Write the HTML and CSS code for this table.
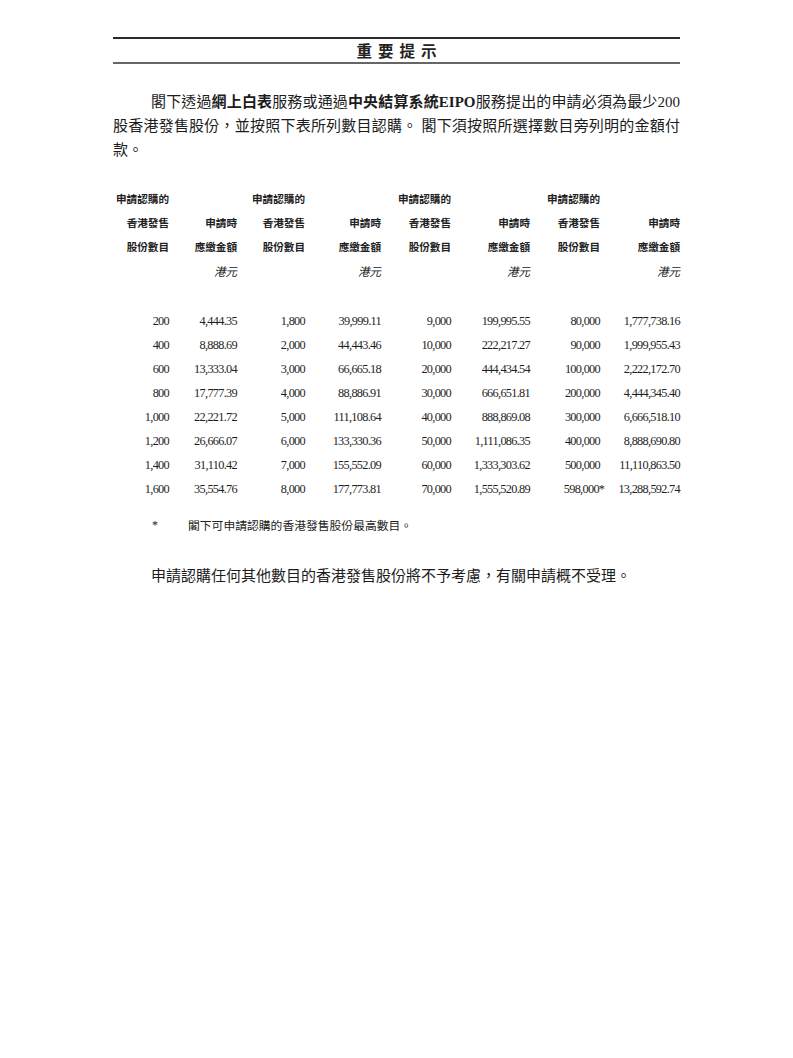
FILE: index.html
```html
<!DOCTYPE html>
<html lang="zh-Hant">
<head>
<meta charset="utf-8">
<title>重要提示</title>
<link rel="stylesheet" href="styles.css">
</head>
<body>
<div class="page">
  <div class="title">重要提示</div>

  <p class="para">閣下透過<b>網上白表</b>服務或通過<b>中央結算系統EIPO</b>服務提出的申請必須為最少200股香港發售股份，並按照下表所列數目認購。 閣下須按照所選擇數目旁列明的金額付款。</p>

  <div class="grid head">
    <div class="h">申請認購的</div><div class="h"></div>
    <div class="h">申請認購的</div><div class="h"></div>
    <div class="h">申請認購的</div><div class="h"></div>
    <div class="h">申請認購的</div><div class="h"></div>

    <div class="h">香港發售</div><div class="h">申請時</div>
    <div class="h">香港發售</div><div class="h">申請時</div>
    <div class="h">香港發售</div><div class="h">申請時</div>
    <div class="h">香港發售</div><div class="h">申請時</div>

    <div class="h">股份數目</div><div class="h">應繳金額</div>
    <div class="h">股份數目</div><div class="h">應繳金額</div>
    <div class="h">股份數目</div><div class="h">應繳金額</div>
    <div class="h">股份數目</div><div class="h">應繳金額</div>

    <div class="h"></div><div class="h unit">港元</div>
    <div class="h"></div><div class="h unit">港元</div>
    <div class="h"></div><div class="h unit">港元</div>
    <div class="h"></div><div class="h unit">港元</div>
  </div>

  <div class="grid body">
    <div class="n">200</div><div class="n">4,444.35</div><div class="n">1,800</div><div class="n">39,999.11</div><div class="n">9,000</div><div class="n">199,995.55</div><div class="n">80,000</div><div class="n">1,777,738.16</div>
    <div class="n">400</div><div class="n">8,888.69</div><div class="n">2,000</div><div class="n">44,443.46</div><div class="n">10,000</div><div class="n">222,217.27</div><div class="n">90,000</div><div class="n">1,999,955.43</div>
    <div class="n">600</div><div class="n">13,333.04</div><div class="n">3,000</div><div class="n">66,665.18</div><div class="n">20,000</div><div class="n">444,434.54</div><div class="n">100,000</div><div class="n">2,222,172.70</div>
    <div class="n">800</div><div class="n">17,777.39</div><div class="n">4,000</div><div class="n">88,886.91</div><div class="n">30,000</div><div class="n">666,651.81</div><div class="n">200,000</div><div class="n">4,444,345.40</div>
    <div class="n">1,000</div><div class="n">22,221.72</div><div class="n">5,000</div><div class="n">111,108.64</div><div class="n">40,000</div><div class="n">888,869.08</div><div class="n">300,000</div><div class="n">6,666,518.10</div>
    <div class="n">1,200</div><div class="n">26,666.07</div><div class="n">6,000</div><div class="n">133,330.36</div><div class="n">50,000</div><div class="n">1,111,086.35</div><div class="n">400,000</div><div class="n">8,888,690.80</div>
    <div class="n">1,400</div><div class="n">31,110.42</div><div class="n">7,000</div><div class="n">155,552.09</div><div class="n">60,000</div><div class="n">1,333,303.62</div><div class="n">500,000</div><div class="n">11,110,863.50</div>
    <div class="n">1,600</div><div class="n">35,554.76</div><div class="n">8,000</div><div class="n">177,773.81</div><div class="n">70,000</div><div class="n">1,555,520.89</div><div class="n">598,000<span class="hang">*</span></div><div class="n">13,288,592.74</div>
  </div>

  <div class="note"><span class="star">*</span><span class="note-text">閣下可申請認購的香港發售股份最高數目。</span></div>

  <p class="final">申請認購任何其他數目的香港發售股份將不予考慮，有關申請概不受理。</p>
</div>
</body>
</html>
```

FILE: styles.css
```css
html, body {
  margin: 0;
  padding: 0;
  background: #ffffff;
}

body {
  color: #1c1c1c;
  font-family: "Liberation Serif", "Noto Sans CJK TC", serif;
}

.page {
  width: 567px;
  padding: 37px 0 0 113px;
}

.title {
  border-top: 2px solid #2a2a2a;
  border-bottom: 2px solid #666666;
  height: 23px;
  line-height: 23px;
  text-align: center;
  font-family: "Noto Sans CJK TC", sans-serif;
  font-weight: bold;
  font-size: 15.5px;
  letter-spacing: 6px;
  padding-left: 6px;
  color: #222;
}

.para {
  margin: 26px 0 0 0;
  font-size: 15px;
  line-height: 24px;
  text-indent: 38px;
  text-align: justify;
}

.para b {
  font-weight: bold;
  font-family: "Liberation Serif", "Noto Sans CJK TC", serif;
}

.grid {
  display: grid;
  grid-template-columns: 56px 68px 68px 76px 70px 79px 70px 80px;
}

.head {
  margin-top: 25px;
}

.h {
  height: 24px;
  line-height: 24px;
  text-align: right;
  white-space: nowrap;
  font-family: "Noto Sans CJK TC", sans-serif;
  font-weight: bold;
  font-size: 10.6px;
  color: #222;
}

.h.unit {
  font-weight: normal;
  font-style: italic;
  font-size: 11.5px;
}

.body {
  margin-top: 26px;
}

.n {
  height: 24px;
  line-height: 24px;
  text-align: right;
  white-space: nowrap;
  font-family: "Liberation Serif", serif;
  font-size: 12.3px;
  letter-spacing: -0.7px;
  color: #1e1e1e;
}

.hang {
  margin-right: -5px;
  letter-spacing: 0;
}

.note {
  display: flex;
  margin-top: 12px;
  height: 24px;
  line-height: 24px;
  font-size: 11.5px;
  color: #222;
}

.star {
  width: 36px;
  padding-left: 39px;
  font-family: "Liberation Serif", serif;
  font-size: 12px;
}

.note-text {
  font-family: "Noto Sans CJK TC", sans-serif;
  font-size: 11.8px;
}

.final {
  margin: 27px 0 0 38px;
  font-size: 15px;
  line-height: 24px;
}
```
